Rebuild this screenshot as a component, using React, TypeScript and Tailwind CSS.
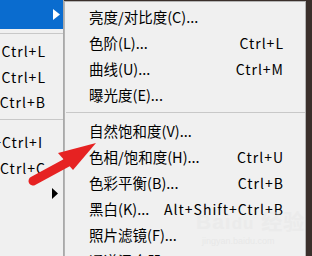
import React from "react";

const font = { fontFamily: '"Noto Sans CJK SC", "Noto Sans", sans-serif' };

function Sep({ top, bottom }: { top: string; bottom: string }) {
  return (
    <div className={`${top} ${bottom} shrink-0`}>
      <div className="h-px bg-[#c8c8c8]" />
    </div>
  );
}

const subItems: { label: string; sc?: string }[] = [
  { label: "亮度/对比度(C)..." },
  { label: "色阶(L)...", sc: "Ctrl+L" },
  { label: "曲线(U)...", sc: "Ctrl+M" },
  { label: "曝光度(E)..." },
];
const subItems2: { label: string; sc?: string }[] = [
  { label: "自然饱和度(V)..." },
  { label: "色相/饱和度(H)...", sc: "Ctrl+U" },
  { label: "色彩平衡(B)...", sc: "Ctrl+B" },
  { label: "黑白(K)...", sc: "Alt+Shift+Ctrl+B" },
  { label: "照片滤镜(F)..." },
  { label: "通道混合器..." },
];

function SubRow({ label, sc }: { label: string; sc?: string }) {
  return (
    <div className="h-[26px] shrink-0 flex items-center pl-[24px] pr-[21px] text-black whitespace-nowrap">
      <span className="flex-1 text-[14.5px]">{label}</span>
      {sc && <span className="text-[14px] tracking-[1px]">{sc}</span>}
    </div>
  );
}

function LeftRow({ text, h, pr = "pr-[17px]" }: { text: string; h: string; pr?: string }) {
  return (
    <div className={`${h} ${pr} shrink-0 flex items-center justify-end text-[14px] text-black whitespace-nowrap tracking-[1px]`}>
      {text}
    </div>
  );
}

export default function App() {
  return (
    <div className="relative w-[312px] h-[256px] overflow-hidden flex bg-[#3a2f2b]" style={font}>
      {/* Left menu */}
      <div className="w-[64px] h-full shrink-0 bg-[#f0f0f0] border-r border-[#a9a9a9] flex flex-col overflow-hidden">
        <div className="h-[29px] bg-[#0a6ccf] flex items-center justify-end pr-[3px] shrink-0">
          <svg width="7" height="11" viewBox="0 0 7 11">
            <polygon points="0,0 7,5.5 0,11" fill="#ffffff" />
          </svg>
        </div>
        <Sep top="pt-[4px]" bottom="pb-[5px]" />
        <LeftRow text="Ctrl+L" h="h-[25px]" />
        <LeftRow text="Ctrl+L" h="h-[26px]" />
        <LeftRow text="Ctrl+B" h="h-[25px]" />
        <Sep top="pt-[4px]" bottom="pb-[9px]" />
        <LeftRow text="Shift+Ctrl+I" h="h-[26px]" pr="pr-[20px]" />
        <LeftRow text="Ctrl+C" h="h-[26px]" />
        <div className="h-[24px] flex items-center justify-end pr-[5px] shrink-0">
          <svg width="6" height="11" viewBox="0 0 6 11">
            <polygon points="0,0 6,5.5 0,11" fill="#000000" />
          </svg>
        </div>
      </div>
      {/* Submenu */}
      <div className="w-[242px] h-[270px] shrink-0 mt-[1px] bg-[#f0f0f0] border border-[#b4b4b4] pt-[2px] flex flex-col">
        {subItems.map((it, i) => (
          <SubRow key={i} {...it} />
        ))}
        <div className="pt-[4px] pb-[5px] pl-[1px] shrink-0">
          <div className="h-px bg-[#c8c8c8]" />
        </div>
        {subItems2.map((it, i) => (
          <SubRow key={i} {...it} />
        ))}
      </div>
      {/* watermark */}
      <div className="absolute left-[196px] top-[211px] flex flex-col items-start opacity-40 pointer-events-none">
        <div className="text-[21px] font-bold text-[#e4e4e4] leading-none tracking-[1px]" style={{ fontFamily: '"Liberation Sans", "Noto Sans CJK SC", sans-serif' }}>
          Bai<span className="text-[17px]">du</span> 经验
        </div>
        <div className="text-[9px] text-[#dcdcdc] leading-none mt-[5px] ml-[6px]" style={{ fontFamily: '"Liberation Sans", sans-serif' }}>
          jingyan.baidu.com
        </div>
      </div>
      {/* red arrow */}
      <svg className="absolute left-0 top-0 pointer-events-none" width="312" height="256" viewBox="0 0 312 256">
        <line x1="33" y1="181" x2="68" y2="162" stroke="#e62222" strokeWidth="9" strokeLinecap="round" />
        <polygon points="96,143 58,153 73,170" fill="#e62222" />
      </svg>
    </div>
  );
}
